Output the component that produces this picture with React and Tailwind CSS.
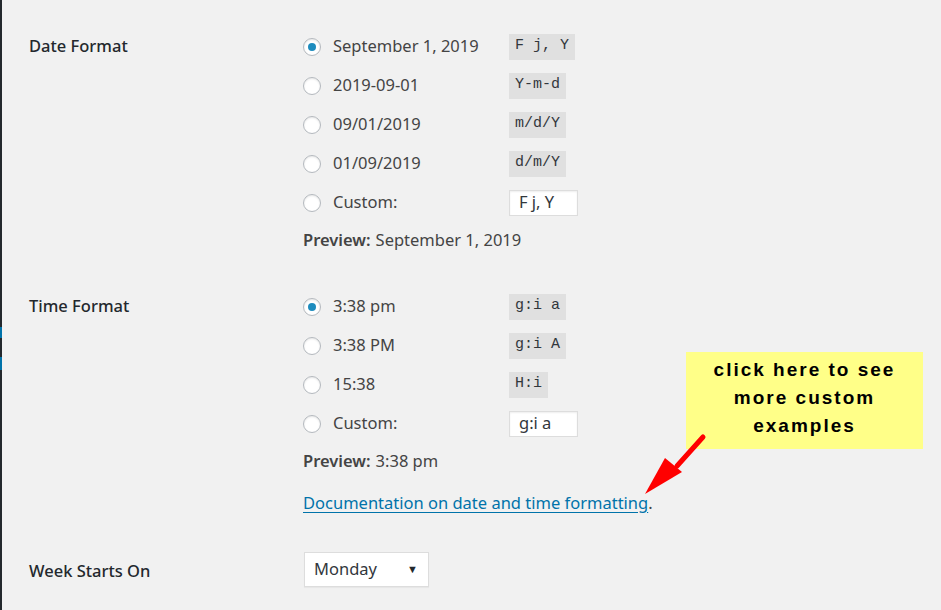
import React from 'react';

const Radio = ({ checked }) => (
    <span className="w-[18px] h-[18px] rounded-full border border-[#b4b9be] bg-white shadow-[inset_0_1px_2px_rgba(0,0,0,0.1)] flex items-center justify-center shrink-0">
        {checked && <span className="w-[8px] h-[8px] rounded-full bg-[#1e8cbe]" />}
    </span>
);

const Option = ({ checked, label, code, custom }) => (
    <div className="h-[39px] flex items-center">
        <div className="w-[206px] flex items-center gap-[12px]">
            <Radio checked={checked} />
            <span>{label}</span>
        </div>
        {custom ? (
            <span className="w-[69px] h-[26px] bg-white border border-[#ddd] shadow-[inset_0_1px_2px_rgba(0,0,0,0.07)] flex items-center pl-[9px] text-[#32373c]">
                {custom}
            </span>
        ) : (
            <code className="h-[26px] px-[6px] flex items-center bg-[#e0e0e0] text-[#32373c] text-[15px]" style={{ fontFamily: '"Liberation Mono", monospace' }}>
                {code}
            </code>
        )}
    </div>
);

const App = () => {
    return (
        <div className="flex h-[610px] overflow-hidden bg-[#f1f1f1] text-[#444] text-[16.5px]" style={{ fontFamily: '"Noto Sans", sans-serif' }}>
            {/* admin menu edge */}
            <div className="w-[2px] flex flex-col bg-[#23282d] shrink-0">
                <div className="h-[327px]" />
                <div className="h-[11px] bg-[#0073aa]" />
                <div className="h-[19px]" />
                <div className="h-[13px] bg-[#0073aa]" />
            </div>

            <div className="relative flex-1 pl-[27px]">
                {/* Date Format */}
                <div className="flex pt-[27px]">
                    <div className="w-[274px] h-[39px] flex items-center font-medium text-[#23282d]">Date Format</div>
                    <div className="flex flex-col">
                        <Option checked label="September 1, 2019" code="F j, Y" />
                        <Option label="2019-09-01" code="Y-m-d" />
                        <Option label="09/01/2019" code="m/d/Y" />
                        <Option label="01/09/2019" code="d/m/Y" />
                        <Option label="Custom:" custom="F j, Y" />
                        <div className="h-[36px] flex items-center">
                            <span className="font-semibold mr-[5px]">Preview:</span> September 1, 2019
                        </div>
                    </div>
                </div>

                {/* Time Format */}
                <div className="flex mt-[29px]">
                    <div className="w-[274px] h-[39px] flex items-center font-medium text-[#23282d]">Time Format</div>
                    <div className="flex flex-col">
                        <Option checked label="3:38 pm" code="g:i a" />
                        <Option label="3:38 PM" code="g:i A" />
                        <Option label="15:38" code="H:i" />
                        <Option label="Custom:" custom="g:i a" />
                        <div className="h-[36px] flex items-center">
                            <span className="font-semibold mr-[5px]">Preview:</span> 3:38 pm
                        </div>
                        <div className="h-[38px] mt-[5px] flex items-center">
                            <a href="#" className="text-[#0073aa] underline underline-offset-[3px]">Documentation on date and time formatting</a>.
                        </div>
                    </div>
                </div>

                {/* Week Starts On */}
                <div className="flex mt-[30px]">
                    <div className="w-[274px] h-[35px] pt-[3px] flex items-center font-medium text-[#23282d]">Week Starts On</div>
                    <div className="w-[125px] h-[35px] ml-[1px] bg-white border border-[#ddd] shadow-[0_1px_1px_rgba(0,0,0,0.04)] flex items-center justify-between pl-[9px] pr-[10px] text-[#32373c]">
                        <span>Monday</span>
                        <span className="text-[11px] text-[#23282d]">▼</span>
                    </div>
                </div>

                {/* annotation */}
                <div className="absolute left-[684px] top-[352px] w-[237px] h-[97px] bg-[#ffff88] pt-[4px] flex flex-col items-center text-black font-bold text-[19px] leading-[28px] tracking-[2px]" style={{ fontFamily: '"Liberation Sans", Arial, sans-serif' }}>
                    <span>click here to see</span>
                    <span>more custom</span>
                    <span>examples</span>
                </div>
                <svg className="absolute left-[637px] top-[430px]" width="70" height="70" viewBox="0 0 70 70">
                    <line x1="64" y1="7" x2="38" y2="36" stroke="#ff0000" strokeWidth="5" strokeLinecap="round" />
                    <polygon points="6,64 26,28 43,42" fill="#ff0000" />
                </svg>
            </div>
        </div>
    );
};

export default App;
